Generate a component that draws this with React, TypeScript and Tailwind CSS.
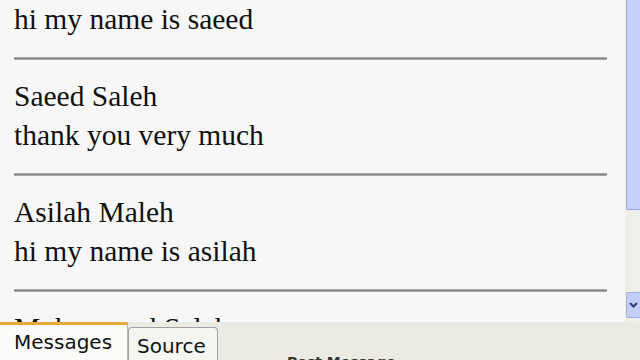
import React from "react";

type Msg = { name: string; text: string };

const messages: Msg[] = [
  { name: "Saeed Saleh", text: "hi my name is saeed" },
  { name: "Saeed Saleh", text: "thank you very much" },
  { name: "Asilah Maleh", text: "hi my name is asilah" },
  { name: "Mohammed Saleh", text: "hello everyone" },
];

function MessageRow({ msg, last }: { msg: Msg; last: boolean }) {
  return (
    <div>
      <div className="h-[39px] leading-[39px] whitespace-nowrap">{msg.name}</div>
      <div className="h-[39px] leading-[39px] whitespace-nowrap">{msg.text}</div>
      {!last && (
        <div className="mt-[18px] mb-[17px] h-[3px] border-t border-b border-[#a9a9a9] bg-[#848484]" />
      )}
    </div>
  );
}

function Scrollbar() {
  return (
    <div className="flex w-[14px] shrink-0 flex-col bg-[#efeee8]">
      <div className="h-[210px] rounded-bl-[2px] border-b border-l border-[#9aa6de] bg-[#c7d0f8]" />
      <div className="flex-1" />
      <div className="mb-[4px] flex h-[26px] items-center justify-center rounded-l-[2px] border border-r-0 border-[#a4b0e4] bg-[#c3cdf7]">
        <svg width="9" height="6" viewBox="0 0 9 6">
          <path d="M1 1 L4.5 4.5 L8 1" fill="none" stroke="#2b3a78" strokeWidth="2" />
        </svg>
      </div>
    </div>
  );
}

export default function App() {
  return (
    <div className="flex h-[360px] w-[640px] flex-col overflow-hidden bg-[#ecebe3]">
      <div className="flex h-[322px] shrink-0 overflow-hidden">
        <div
          className="h-[322px] flex-1 overflow-hidden border-r border-[#f0efe6] bg-[#f7f7f7] pl-[14px] pr-[18px] text-[29.5px] text-[#111]"
          style={{ fontFamily: '"Liberation Serif", "Times New Roman", serif' }}
        >
          <div className="-mt-[39px]">
            {messages.map((m, i) => (
              <MessageRow key={i} msg={m} last={i === messages.length - 1} />
            ))}
          </div>
        </div>
        <Scrollbar />
      </div>
      <div
        className="flex h-[38px] shrink-0 items-start overflow-hidden text-[20px] text-[#111]"
        style={{ fontFamily: '"DejaVu Sans", Verdana, sans-serif' }}
      >
        <div className="flex h-[38px] w-[128px] shrink-0 flex-col border-r border-[#b8b8b0] bg-[#fbfbf9]">
          <div className="h-[3px] bg-[#e9a93a]" />
          <div className="pl-[14px] pt-[4px] leading-[26px]">Messages</div>
        </div>
        <div className="mt-[5px] flex h-[33px] w-[90px] shrink-0 items-start rounded-t-[4px] border border-b-0 border-[#a0a0a0] bg-[#f5f5f1] pl-[8px] pt-[5px] leading-[26px]">
          Source
        </div>
        <div className="ml-[69px] mt-[32px] shrink-0 text-[14px] font-bold leading-[16px] text-[#333]">
          Post Message
        </div>
      </div>
    </div>
  );
}
